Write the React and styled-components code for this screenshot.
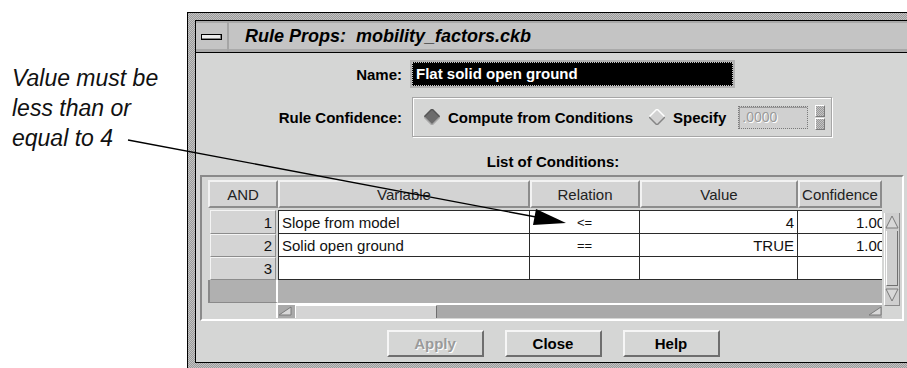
import styled, { createGlobalStyle } from "styled-components"

const stipple = "repeating-conic-gradient(#c4c4c4 0 25%, #9a9a9a 0 50%) 0 0 / 2px 2px";

const GlobalStyle = createGlobalStyle`
    * { box-sizing: border-box; }
    html, body { margin: 0; padding: 0; background: #fff; }
    body { font-family: "Liberation Sans", Arial, sans-serif; }
`;

const Page = styled.div`
    position: relative;
    width: 907px;
    height: 368px;
    overflow: hidden;
    display: flex;
    align-items: flex-start;
    background: #fff;
`;

const Note = styled.div`
    flex: none;
    width: 187px;
    padding: 63px 0 0 12px;
    font-style: italic;
    font-size: 23px;
    line-height: 30px;
    color: #111;
`;

const Window = styled.div`
    flex: none;
    width: 732px;
    margin-top: 12px;
    border: 1px solid #000;
    padding: 7px;
    background: ${stipple};
`;

const Inner = styled.div`
    border: 1px solid #000;
    background: #d5d6d5;
`;

const TitleBar = styled.div`
    display: flex;
    height: 32px;
    border-bottom: 1px solid #000;
    background: #c4c4c4;
    box-shadow: inset 0 2px 0 #a9a9a9, inset 0 -3px 0 #a9a9a9;
`;

const MenuButton = styled.div`
    width: 33px;
    display: flex;
    align-items: center;
    justify-content: center;
    border-right: 2px solid #a5a5a5;
`;

const MenuBar = styled.div`
    width: 21px;
    height: 6px;
    border: 1px solid #000;
    background: #ececec;
    box-shadow: inset -1px -1px 0 #888;
`;

const Title = styled.div`
    padding-left: 16px;
    display: flex;
    align-items: center;
    font-size: 18px;
    font-weight: bold;
    font-style: italic;
    color: #000;
`;

const Content = styled.div`
    display: flex;
    flex-direction: column;
    padding: 7px 0 5px 0;
`;

const Form = styled.div`
    display: grid;
    grid-template-columns: 206px auto;
    column-gap: 8px;
    row-gap: 9px;
    align-items: center;
    justify-items: start;
`;

const Label = styled.div`
    justify-self: end;
    font-size: 15px;
    font-weight: bold;
    color: #000;
`;

const NameField = styled.div`
    width: 325px;
    height: 28px;
    padding: 2px;
    background: #b2b2b2;
`;

const NameInput = styled.div`
    height: 100%;
    background: #000;
    border: 1px dotted #c8c8c8;
    color: #fff;
    font-size: 15px;
    font-weight: bold;
    line-height: 22px;
    padding-left: 3px;
    white-space: nowrap;
`;

const ConfBox = styled.div`
    margin-left: 2px;
    width: 420px;
    height: 40px;
    display: flex;
    align-items: center;
    padding-left: 11px;
    border: 1px solid #a6a6a6;
    box-shadow: inset 1px 1px 0 #fff, 1px 1px 0 #fff;
`;

const Radio = styled.div`
    display: flex;
    align-items: center;
    gap: 8px;
    margin-right: ${p => p.$gap}px;
    font-size: 15px;
    font-weight: bold;
    white-space: nowrap;
`;

const SpecField = styled.div`
    width: 70px;
    height: 23px;
    padding-left: 3px;
    display: flex;
    align-items: center;
    background: #d0d0d0;
    border: 1px dotted #7a7a7a;
    box-shadow: inset 1px 1px 0 #9a9a9a;
    font-size: 14px;
    color: #9a9a9a;
    text-shadow: 1px 1px 0 #fff;
`;

const Spinner = styled.div`
    margin-left: 7px;
    display: flex;
    flex-direction: column;
    gap: 1px;
`;

const SpinBox = styled.div`
    width: 10px;
    height: 12px;
    background: ${stipple};
    border: 1px solid;
    border-color: #fff #7a7a7a #7a7a7a #fff;
`;

const ListTitle = styled.div`
    margin-top: 17px;
    height: 16px;
    line-height: 16px;
    text-align: center;
    font-size: 15px;
    font-weight: bold;
    color: #000;
`;

const Panel = styled.div`
    margin: 5px 6px 0 4px;
    height: 146px;
    display: flex;
    gap: 2px;
    padding: 3px 2px 1px 6px;
    border: 2px solid;
    border-color: #8a8a8a #fff #fff #8a8a8a;
`;

const TableArea = styled.div`
    width: 674px;
    display: flex;
    flex-direction: column;
`;

const HeaderRow = styled.div`
    display: flex;
    height: 28px;
    margin-bottom: 2px;
`;

const HeadCell = styled.div`
    flex: none;
    width: ${p => p.$w}px;
    display: flex;
    align-items: center;
    justify-content: center;
    overflow: hidden;
    white-space: nowrap;
    background: #d3d3d3;
    border: 2px solid;
    border-color: #f2f2f2 #8c8c8c #8c8c8c #f2f2f2;
    font-size: 15px;
    color: #222;
`;

const BodyRow = styled.div`
    display: flex;
    height: ${p => p.$h}px;
`;

const RowNum = styled.div`
    flex: none;
    width: 66px;
    margin: 0 2px;
    display: flex;
    align-items: center;
    justify-content: flex-end;
    padding-right: 3px;
    background: #d4d4d4;
    border: 1px solid;
    border-color: #f4f4f4 #8c8c8c #8c8c8c #f4f4f4;
    font-size: 15px;
    color: #111;
`;

const DataRow = styled.div`
    display: flex;
    flex: 1;
    background: #fff;
    border-left: 1px solid #2a2a2a;
    border-bottom: 1px solid #2a2a2a;
    border-top: ${p => (p.$top ? "1px solid #2a2a2a" : "none")};
`;

const Cell = styled.div`
    flex: none;
    width: ${p => p.$w}px;
    display: flex;
    align-items: center;
    justify-content: ${p => p.$justify};
    padding: ${p => (p.$clip ? "0 0 0 58px" : "0 3px")};
    border-right: ${p => (p.$last ? "none" : "1px solid #2a2a2a")};
    overflow: hidden;
    white-space: nowrap;
    font-size: ${p => (p.$small ? 13 : 15)}px;
    color: #111;
`;

const Filler = styled.div`
    display: flex;
    height: 23px;
    background: #b0b0b0;
`;

const FillLeft = styled.div`
    width: 70px;
    border-left: 2px solid #8a8a8a;
    border-right: 2px solid #fff;
    border-bottom: 1px solid #8a8a8a;
`;

const HScrollRow = styled.div`
    display: flex;
    height: 15px;
`;

const HScrollGap = styled.div`
    width: 70px;
    border-right: 2px solid #fff;
`;

const HScroll = styled.div`
    flex: 1;
    display: flex;
    align-items: stretch;
    border-top: 2px solid #fff;
    background: #a9a9a9;
`;

const Thumb = styled.div`
    width: 142px;
    margin-left: 3px;
    background: #d4d4d4;
    border-top: 1px solid #fff;
    border-left: 1px solid #fff;
    border-right: 1px solid #6e6e6e;
`;

const Spacer = styled.div`
    flex: 1;
`;

const VScroll = styled.div`
    flex: none;
    width: 16px;
    height: 93px;
    margin-top: 33px;
    display: flex;
    flex-direction: column;
    align-items: center;
    padding: 2px 0 3px;
    background: #cfcfcf;
    border-left: 1px solid #fff;
    border-right: 1px solid #8a8a8a;
    border-bottom: 1px solid #8a8a8a;
`;

const VThumb = styled.div`
    flex: 1;
    width: 12px;
    margin: 2px 0;
    border-left: 1px solid #fff;
    border-right: 1px solid #707070;
    border-bottom: 1px solid #707070;
`;

const ButtonRow = styled.div`
    display: flex;
    justify-content: center;
    gap: 21px;
    margin-top: 9px;
`;

const Button = styled.div`
    width: 97px;
    height: 27px;
    display: flex;
    align-items: center;
    justify-content: center;
    background: #d5d6d5;
    border: 2px solid;
    border-color: #f6f6f6 #6e6e6e #6e6e6e #f6f6f6;
    font-size: 15px;
    font-weight: bold;
    color: ${p => (p.$disabled ? "#9a9a9a" : "#000")};
    text-shadow: ${p => (p.$disabled ? "1px 1px 0 #fff" : "none")};
`;

const Overlay = styled.svg`
    position: absolute;
    left: 0;
    top: 0;
    pointer-events: none;
`;

const Diamond = ({ on }) => (
    <svg width="16" height="16" viewBox="0 0 16 16">
        <polygon points="8,0 16,8 8,16 0,8" fill={on ? "#6c6c6c" : "#d2d2d2"} />
        <polyline points="0,8 8,0 16,8" fill="none" stroke={on ? "#555" : "#fff"} strokeWidth="1.5" />
        <polyline points="0,8 8,16 16,8" fill="none" stroke={on ? "#a8a8a8" : "#858585"} strokeWidth="1.5" />
    </svg>
);

const arrowShapes = {
    up: { w: 14, h: 14, pts: "7,1 13,13 1,13" },
    down: { w: 14, h: 14, pts: "1,1 13,1 7,13" },
    left: { w: 14, h: 11, pts: "1,10 13,2 13,10" },
    right: { w: 14, h: 11, pts: "1,10 13,2 13,10" },
};

const Arrow = ({ dir }) => {
    const a = arrowShapes[dir];
    return (
        <svg width={a.w} height={a.h} viewBox={`0 0 ${a.w} ${a.h}`} style={{ flex: "none" }}>
            <polygon points={a.pts} fill="#d8d8d8" stroke="#7a7a7a" strokeWidth="1" />
        </svg>
    );
};

const columns = [
    { title: "Variable", w: 251, head: 252, justify: "flex-start" },
    { title: "Relation", w: 110, head: 110, justify: "center", small: true },
    { title: "Value", w: 158, head: 158, justify: "flex-end" },
    { title: "Confidence", w: 84, head: 84, justify: "flex-start", clip: true, last: true },
];

const rows = [
    { n: 1, h: 24, cells: ["Slope from model", "<=", "4", "1.000"] },
    { n: 2, h: 23, cells: ["Solid open ground", "==", "TRUE", "1.000"] },
    { n: 3, h: 23, cells: ["", "", "", ""] },
];

const App = () => {
    return (
        <Page>
            <GlobalStyle />
            <Note>
                Value must be<br />
                less than or<br />
                equal to 4
            </Note>
            <Window>
                <Inner>
                    <TitleBar>
                        <MenuButton><MenuBar /></MenuButton>
                        <Title>Rule Props:&nbsp; mobility_factors.ckb</Title>
                    </TitleBar>
                    <Content>
                        <Form>
                            <Label>Name:</Label>
                            <NameField>
                                <NameInput>Flat solid open ground</NameInput>
                            </NameField>
                            <Label>Rule Confidence:</Label>
                            <ConfBox>
                                <Radio $gap={16}><Diamond on />Compute from Conditions</Radio>
                                <Radio $gap={12}><Diamond />Specify</Radio>
                                <SpecField>.0000</SpecField>
                                <Spinner>
                                    <SpinBox />
                                    <SpinBox />
                                </Spinner>
                            </ConfBox>
                        </Form>
                        <ListTitle>List of Conditions:</ListTitle>
                        <Panel>
                            <TableArea>
                                <HeaderRow>
                                    <HeadCell $w={70}>AND</HeadCell>
                                    {columns.map(c => (
                                        <HeadCell key={c.title} $w={c.head}>{c.title}</HeadCell>
                                    ))}
                                </HeaderRow>
                                {rows.map((r, ri) => (
                                    <BodyRow key={r.n} $h={r.h}>
                                        <RowNum>{r.n}</RowNum>
                                        <DataRow $top={ri === 0}>
                                            {columns.map((c, i) => (
                                                <Cell
                                                    key={c.title}
                                                    $w={c.w}
                                                    $justify={c.justify}
                                                    $small={c.small}
                                                    $clip={c.clip}
                                                    $last={c.last}
                                                >
                                                    {r.cells[i]}
                                                </Cell>
                                            ))}
                                        </DataRow>
                                    </BodyRow>
                                ))}
                                <Filler>
                                    <FillLeft />
                                </Filler>
                                <HScrollRow>
                                    <HScrollGap />
                                    <HScroll>
                                        <Arrow dir="left" />
                                        <Thumb />
                                        <Spacer />
                                        <Arrow dir="right" />
                                    </HScroll>
                                </HScrollRow>
                            </TableArea>
                            <VScroll>
                                <Arrow dir="up" />
                                <VThumb />
                                <Arrow dir="down" />
                            </VScroll>
                        </Panel>
                        <ButtonRow>
                            <Button $disabled>Apply</Button>
                            <Button>Close</Button>
                            <Button>Help</Button>
                        </ButtonRow>
                    </Content>
                </Inner>
            </Window>
            <Overlay width="907" height="368" viewBox="0 0 907 368">
                <line x1="128" y1="140" x2="536" y2="217" stroke="#000" strokeWidth="1.3" />
                <polygon points="566,223 536,209 533,225" fill="#000" />
            </Overlay>
        </Page>
    )
}

export default App
